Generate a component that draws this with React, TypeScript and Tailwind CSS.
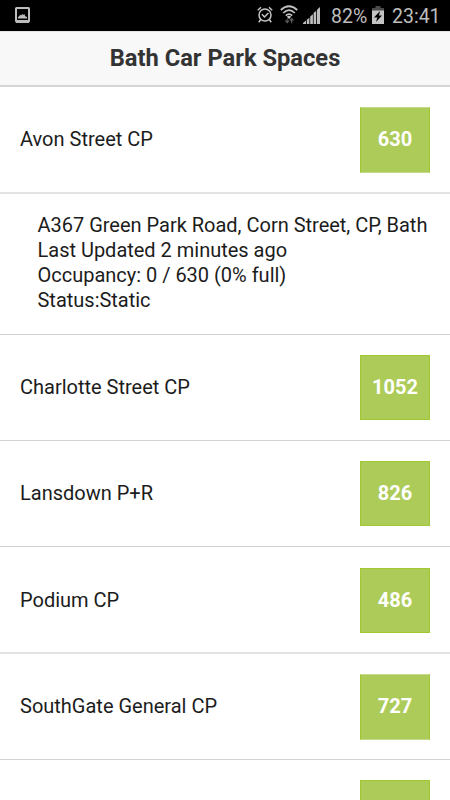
import React from 'react';

interface CarPark {
  name: string;
  spaces: string;
  rowClass: string;
  badgeClass: string;
  details?: string[];
}

const carParks: CarPark[] = [
  {
    name: 'Avon Street CP',
    spaces: '630',
    rowClass: 'h-[107px] border-b-2 border-[#e3e3e3]',
    badgeClass: 'h-[66px] border-x-[#a0c930] border-y-[#c5da8b]',
    details: [
      'A367 Green Park Road, Corn Street, CP, Bath',
      'Last Updated 2 minutes ago',
      'Occupancy: 0 / 630 (0% full)',
      'Status:Static',
    ],
  },
  { name: 'Charlotte Street CP', spaces: '1052', rowClass: 'h-[106px] border-b border-[#d2d2d2]', badgeClass: 'h-[65px] border-[#a0c930]' },
  { name: 'Lansdown P+R', spaces: '826', rowClass: 'h-[106px] border-b border-[#d2d2d2]', badgeClass: 'h-[65px] border-[#a0c930]' },
  { name: 'Podium CP', spaces: '486', rowClass: 'h-[107px] border-b-2 border-[#e3e3e3] pt-[2px]', badgeClass: 'h-[65px] border-[#a0c930]' },
  { name: 'SouthGate General CP', spaces: '727', rowClass: 'h-[106px] border-b border-[#d2d2d2]', badgeClass: 'h-[66px] border-x-[#a0c930] border-y-[#c5da8b]' },
  { name: '', spaces: '', rowClass: 'h-[106px] border-b border-[#d2d2d2]', badgeClass: 'h-[65px] border-[#a0c930]' },
];

function PictureIcon() {
  return (
    <svg width="15" height="16" viewBox="0 0 15 16">
      <rect x="1" y="1" width="13" height="13.5" rx="0.5" fill="none" stroke="#bdbdbd" strokeWidth="2" />
      <path d="M1 13h13v3H1z" fill="#bdbdbd" />
      <path d="M3 11.500V10l1.500-1 .5-1.500 1 1L7.500 7l1 1 .8-1 1 2.200L12 10v1.500z" fill="#bdbdbd" />
    </svg>
  );
}

function AlarmIcon() {
  return (
    <svg width="16" height="18" viewBox="0 0 16 18" fill="none" stroke="#c6c6c6" strokeWidth="1.5">
      <circle cx="8" cy="9" r="6" />
      <path d="M.8 4.200 4 1.200M12 1.200l3.200 3M3.700 13.500 1.800 16.200M12.300 13.500l1.900 2.700" />
      <path d="m5 8.300 2.400 2.700 4-4" />
    </svg>
  );
}

function WifiIcon() {
  return (
    <svg width="18" height="19" viewBox="0 0 18 19" fill="none" stroke="#c2c2c2" strokeWidth="1.7">
      <path d="M.8 5q8.200-7.500 16.400 0M3.200 8q5.800-5.700 11.600 0M5.800 10.700q3.200-3.200 6.400 0" />
      <path d="M6.800 11.800q2.200-2 4.400 0L9 14z" fill="#c2c2c2" stroke="none" />
      <path d="M7.200 13.500v4.500M5.200 15.700l2 2 1.700-2M11.600 18.200v-4.500M9.700 15.500l1.900-2 1.900 2" stroke="#5a5a5a" strokeWidth="1.200" />
    </svg>
  );
}

function SignalIcon() {
  return (
    <svg width="17" height="17" viewBox="0 0 17 17" fill="#bdbdbd">
      <path d="M0 17v-1l3-2.500V17zM3.800 12.800l2.600-2V17H3.800zM7.200 9.500l2.700-2.200V17H7.200zM10.600 6l2.600-2.200V17h-2.600zM14 2.800 17 0v17h-3z" />
    </svg>
  );
}

function BatteryIcon() {
  return (
    <svg width="12" height="18" viewBox="0 0 12 18">
      <path d="M3.500 0h5v2H12v3H0V2h3.500z" fill="#4a4a4a" />
      <path d="M0 4.500h12V18H0z" fill="#c4c4c4" />
      <path d="M8 5 2 11.500h3.300L4 16l6-6.500H7z" fill="#000" />
    </svg>
  );
}

function StatusBar() {
  return (
    <div className="flex h-[31px] shrink-0 items-start bg-black text-[#bdbdbd]">
      <div className="pl-[15px] pt-[7px]">
        <PictureIcon />
      </div>
      <div className="ml-auto flex items-start pr-[11px]">
        <div className="mr-[7px] pt-[6px]">
          <AlarmIcon />
        </div>
        <div className="mr-[5px] pt-[5px]">
          <WifiIcon />
        </div>
        <div className="mr-[11px] pt-[7px]">
          <SignalIcon />
        </div>
        <span className="w-[37px] whitespace-nowrap pt-[5px] text-[19.5px] leading-6">82%</span>
        <div className="ml-[4px] mr-[8px] pt-[6px]">
          <BatteryIcon />
        </div>
        <span className="w-[47px] whitespace-nowrap pt-[5px] text-[19.5px] leading-6">23:41</span>
      </div>
    </div>
  );
}

export default function App() {
  return (
    <div className="flex h-[800px] w-[450px] flex-col overflow-hidden bg-white font-['Roboto',sans-serif] text-[20px] text-[#1c1c1c]">
      <StatusBar />

      {/* Header */}
      <header className="flex h-14 shrink-0 items-center justify-center border-b-2 border-t border-b-[#d6d6d6] border-t-[#e4e4e4] bg-[#f8f8f8] pb-px">
        <h1 className="text-[23.7px] font-bold leading-7 text-[#333]">Bath Car Park Spaces</h1>
      </header>

      {/* Car parks */}
      <ul>
        {carParks.map((park, i) => (
          <li key={i}>
            <div className={`flex items-center justify-between px-5 ${park.rowClass}`}>
              <span className="pb-0.5">{park.name}</span>
              <span className={`flex w-[70px] items-center justify-center border bg-[#adcb59] pb-px font-bold text-white ${park.badgeClass}`}>
                {park.spaces}
              </span>
            </div>
            {park.details && (
              <div className="h-[141px] border-b border-[#d2d2d2] pl-[37.5px] pt-[19px] leading-[25px] tracking-[-0.01px]">
                {park.details.map((line) => (
                  <p key={line} className="whitespace-nowrap">{line}</p>
                ))}
              </div>
            )}
          </li>
        ))}
      </ul>
    </div>
  );
}
